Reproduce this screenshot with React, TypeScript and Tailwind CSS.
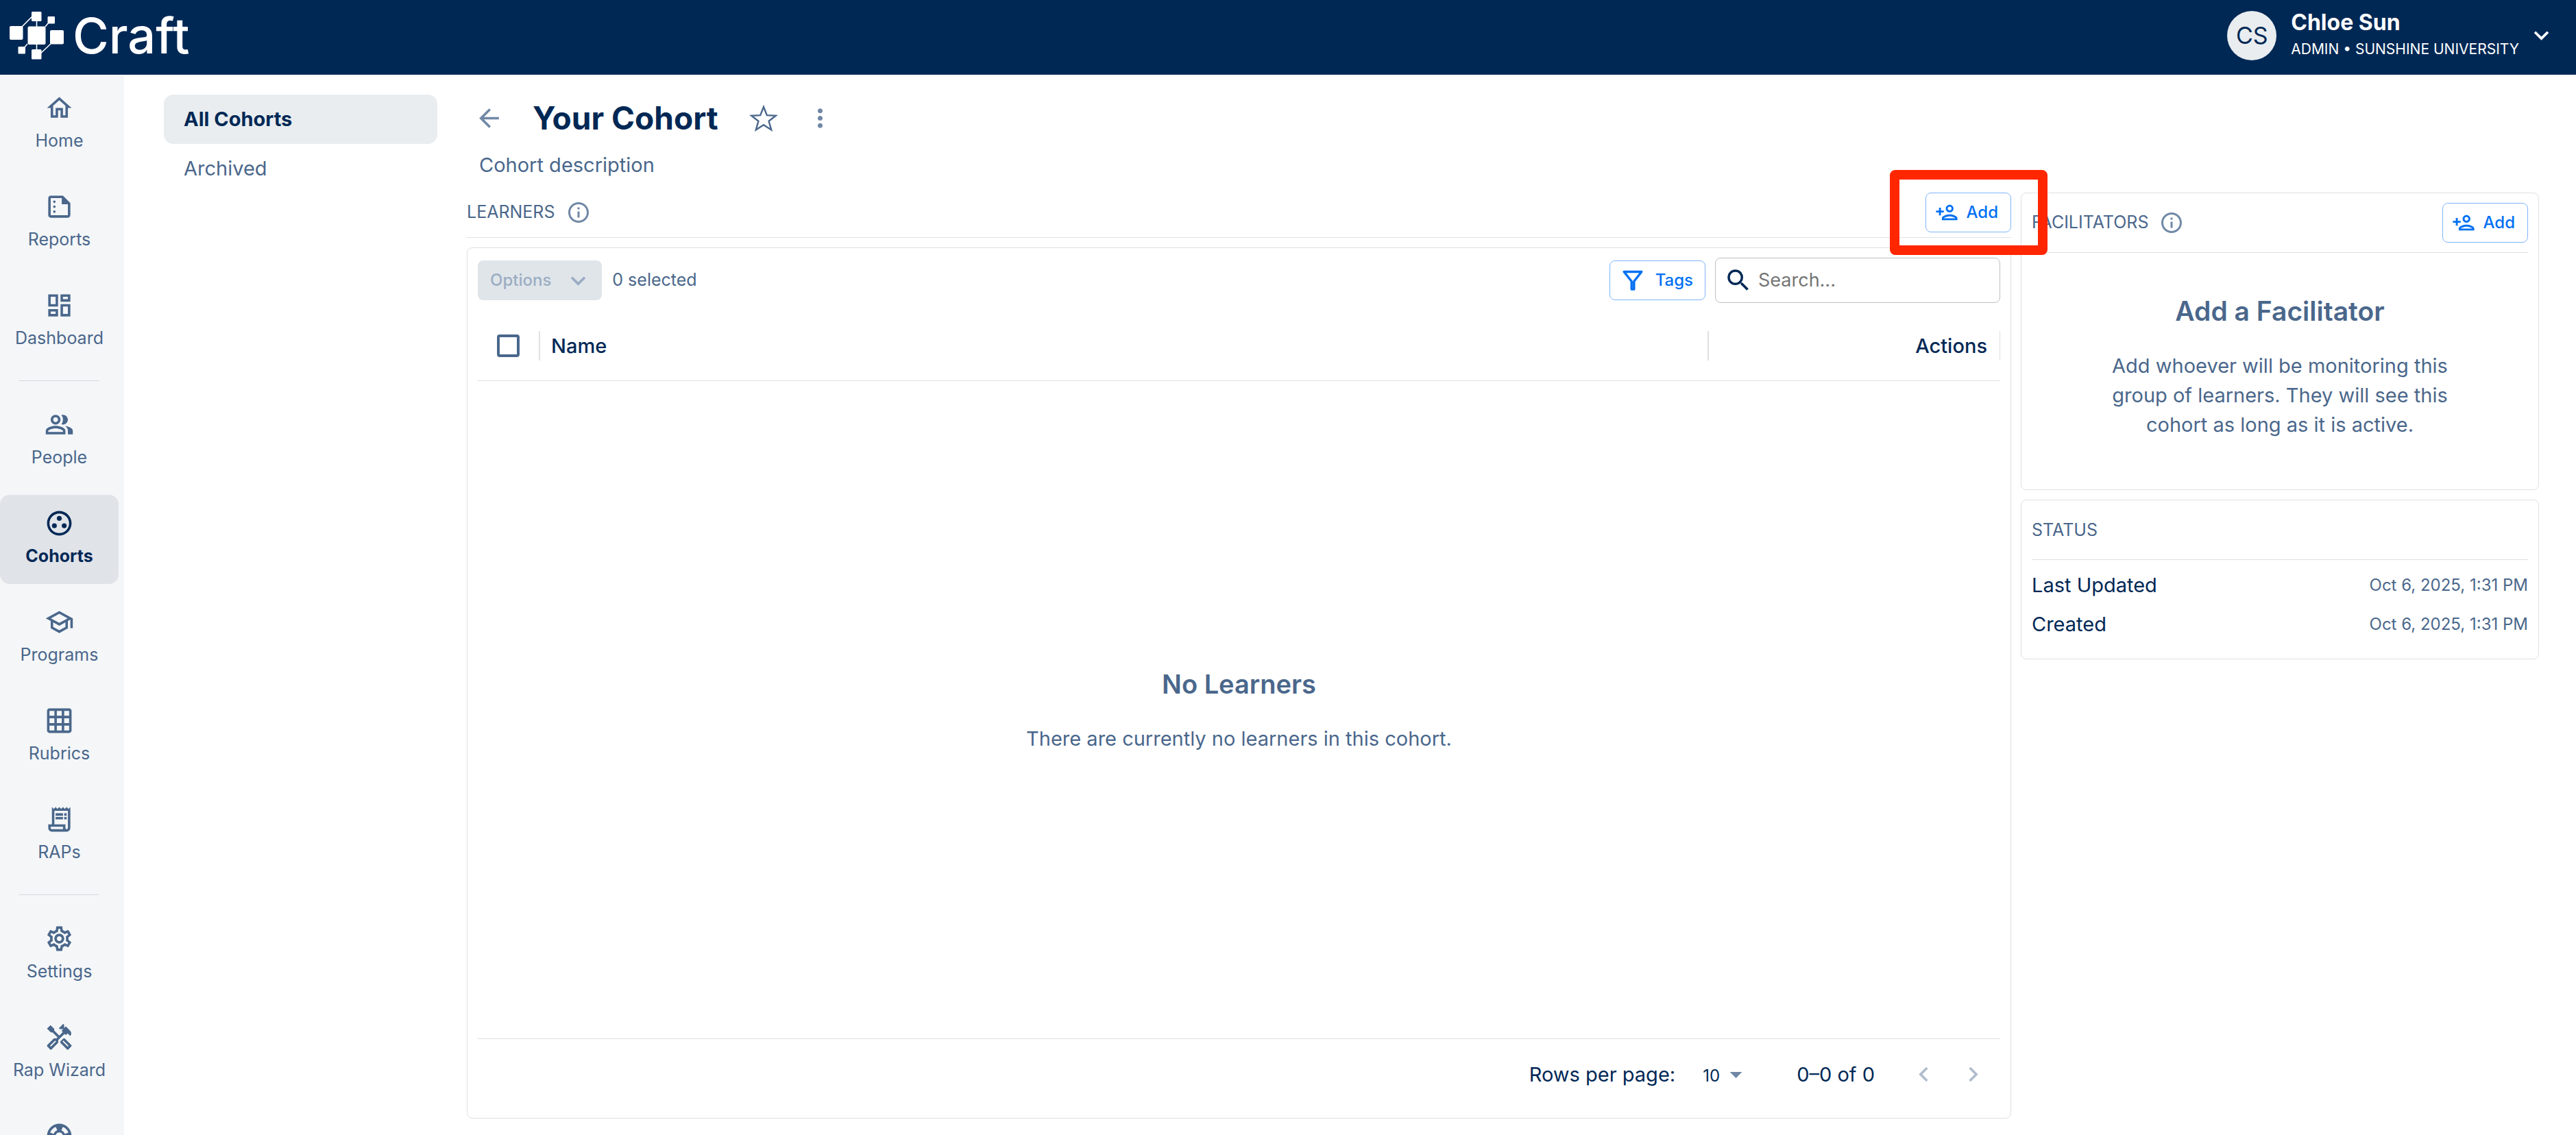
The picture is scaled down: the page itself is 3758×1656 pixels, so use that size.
import { useState } from 'react';
import type { IconType } from 'react-icons';
import {
  MdArrowBack,
  MdArrowDropDown,
  MdGridOn,
  MdKeyboardArrowDown,
  MdKeyboardArrowLeft,
  MdKeyboardArrowRight,
  MdMoreVert,
  MdOutlineDashboard,
  MdOutlineGroupWork,
  MdOutlineHandyman,
  MdOutlineHome,
  MdOutlineInfo,
  MdOutlinePeopleAlt,
  MdOutlinePersonAdd,
  MdOutlineReceiptLong,
  MdOutlineSchool,
  MdOutlineSettings,
  MdOutlineSummarize,
  MdOutlineSupport,
  MdSearch,
} from 'react-icons/md';

interface NavItem {
  label: string;
  icon: IconType;
  active?: boolean;
  iconOnly?: boolean;
}

const navGroups: NavItem[][] = [
  [
    { label: 'Home', icon: MdOutlineHome },
    { label: 'Reports', icon: MdOutlineSummarize },
    { label: 'Dashboard', icon: MdOutlineDashboard },
  ],
  [
    { label: 'People', icon: MdOutlinePeopleAlt },
    { label: 'Cohorts', icon: MdOutlineGroupWork, active: true },
    { label: 'Programs', icon: MdOutlineSchool },
    { label: 'Rubrics', icon: MdGridOn },
    { label: 'RAPs', icon: MdOutlineReceiptLong },
  ],
  [
    { label: 'Settings', icon: MdOutlineSettings },
    { label: 'Rap Wizard', icon: MdOutlineHandyman },
    { label: 'Support', icon: MdOutlineSupport, iconOnly: true },
  ],
];

const statusRows = [
  { label: 'Last Updated', value: 'Oct 6, 2025, 1:31 PM' },
  { label: 'Created', value: 'Oct 6, 2025, 1:31 PM' },
];

function LogoMark() {
  return (
    <svg viewBox="0 0 80 70" className="h-[70px] w-[80px]" fill="#fff" aria-hidden="true">
      <g stroke="#fff" strokeWidth="1.6">
        <path d="M18 22L33 7M39.500 12v46M52 22l5-6M26 47l-5 6M60 47L45 61" />
      </g>
      <rect x="26.500" y="21.500" width="26" height="26.500" rx="2" />
      <rect x="32" y="0" width="14.500" height="14" rx="1.500" />
      <rect x="55.500" y="7" width="10.500" height="10.500" rx="1" />
      <rect x="0" y="21" width="19.500" height="20" rx="2" />
      <rect x="59" y="27" width="20" height="20.500" rx="2" />
      <rect x="12.500" y="51" width="10.500" height="10.500" rx="1" />
      <rect x="32" y="55" width="14.500" height="14.500" rx="1.500" />
    </svg>
  );
}

function StarIcon() {
  return (
    <svg viewBox="0 0 42 40" className="h-10 w-[42px]" fill="none" stroke="currentColor" strokeWidth="2.4" aria-hidden="true">
      <path d="M21 4l4.800 12.200 13 .6-10.200 8 3.600 12.600L21 30.200l-11.200 7.200 3.600-12.600-10.200-8 13-.6z" />
    </svg>
  );
}

function FunnelIcon() {
  return (
    <svg viewBox="0 0 30 30" className="size-[30px]" fill="none" stroke="currentColor" strokeWidth="3.400" strokeLinejoin="round" aria-hidden="true">
      <path d="M2.200 2.500h25.600L16.800 16.500V28h-3.600V16.500z" />
    </svg>
  );
}

function AddButton({ label }: { label: string }) {
  return (
    <button
      type="button"
      aria-label={label}
      className="flex h-[58px] items-center gap-3 rounded-lg border border-[#80b5fb] bg-white pr-[18px] pl-[13px] text-2xl font-medium text-[#0070f3]"
    >
      <MdOutlinePersonAdd className="size-[34px]" />
      Add
    </button>
  );
}

function SectionTitle({ children }: { children: string }) {
  return (
    <div className="flex items-center gap-4">
      <h2 className="text-[25px] text-[#4a678b]">{children}</h2>
      <MdOutlineInfo className="size-9 text-[#7088a6]" />
    </div>
  );
}

function Header() {
  return (
    <header className="flex h-[109px] shrink-0 items-center justify-between bg-[#002855] pr-[29px] pl-[14px] text-white">
      <a href="#" className="flex items-center gap-3 pb-[6px]">
        <LogoMark />
        <span className="text-[72px] leading-none font-medium">Craft</span>
      </a>
      <button type="button" className="flex items-center pb-[6px] text-left">
        <span className="flex size-[72px] items-center justify-center rounded-full bg-[#e9edf0] text-[34px] text-[#002855]">
          CS
        </span>
        <span className="mr-[11px] ml-[21px] flex flex-col">
          <span className="text-[32px] leading-[40px] font-bold">Chloe Sun</span>
          <span className="text-[21px] leading-[38px]">ADMIN • SUNSHINE UNIVERSITY</span>
        </span>
        <MdKeyboardArrowDown className="size-[43px]" />
      </button>
    </header>
  );
}

function Sidebar() {
  return (
    <nav className="w-[181px] shrink-0 overflow-hidden bg-[#f4f6f8] pt-[7px] pr-2">
      {navGroups.map((group, i) => (
        <div key={group[0].label}>
          {i > 0 && <div className="mx-[28px] mt-[21px] mb-[22px] h-px bg-[#d5d8da]" />}
          <div className="flex flex-col gap-[14px]">
            {group.map(({ label, icon: Icon, active, iconOnly }) => (
              <a
                key={label}
                href="#"
                aria-label={label}
                aria-current={active ? 'page' : undefined}
                className={`flex h-[130px] flex-col items-center gap-2 rounded-[14px] pt-5 text-[25px] leading-9 ${
                  active ? 'bg-[#e0e3e8] font-bold text-[#002855]' : 'text-[#4a678b]'
                }`}
              >
                <Icon className="size-[43px]" />
                {!iconOnly && label}
              </a>
            ))}
          </div>
        </div>
      ))}
    </nav>
  );
}

function CohortsMenu() {
  return (
    <nav className="ml-[58px] w-[399px] shrink-0 pt-[29px] text-[29px] leading-[72px]">
      <a href="#" aria-current="page" className="block rounded-[14px] bg-[#e9edf0] px-[29px] font-bold text-[#002855]">
        All Cohorts
      </a>
      <a href="#" className="block px-[29px] text-[#4a678b]">
        Archived
      </a>
    </nav>
  );
}

function LearnersTable() {
  const [allSelected, setAllSelected] = useState(false);
  const [search, setSearch] = useState('');
  const [rows, setRows] = useState('10');

  return (
    <div className="mt-[14px] flex flex-1 flex-col rounded-lg border border-[#e0e0e0] px-[15px]">
      <div className="mt-[14px] flex items-center text-2xl">
        <button
          type="button"
          disabled
          className="flex h-[58px] items-center gap-[18px] rounded-lg bg-[#e0e5ea] pr-[13px] pl-[18px] font-medium text-[#9badc3]"
        >
          Options
          <MdKeyboardArrowDown className="size-[43px]" />
        </button>
        <span className="ml-[15px] text-[25px] text-[#4a678b]">0 selected</span>
        <button
          type="button"
          className="ml-auto flex h-[58px] items-center gap-[18px] rounded-lg border border-[#80b5fb] pr-[17px] pl-[18px] font-medium text-[#0070f3]"
        >
          <FunnelIcon />
          Tags
        </button>
        <label className="ml-[14px] flex h-[66px] w-[416px] items-center gap-2 rounded-lg border border-[#bfbfbf] pl-3 text-[27px]">
          <MdSearch className="size-[42px] shrink-0 text-[#002855]" />
          <input
            type="text"
            value={search}
            onChange={(e) => setSearch(e.target.value)}
            placeholder="Search..."
            aria-label="Search"
            className="min-w-0 flex-1 bg-transparent text-[#002855] outline-none placeholder:text-[#757575]"
          />
        </label>
      </div>

      <table className="mt-[13px] w-full table-fixed text-[29px] text-[#002855]">
        <thead>
          <tr className="h-[100px] border-b border-[#e0e0e0]">
            <th className="w-[91px] p-0">
              <div className="flex items-center justify-between pl-[28px]">
                <input
                  type="checkbox"
                  checked={allSelected}
                  onChange={(e) => setAllSelected(e.target.checked)}
                  aria-label="Select all learners"
                  className="size-[33px] appearance-none rounded-sm border-4 border-[#4a678b] checked:bg-[#4a678b]"
                />
                <span className="h-[43px] w-[2px] bg-[#e0e0e0]" />
              </div>
            </th>
            <th className="p-0 font-medium">
              <div className="flex items-center justify-between pl-4">
                Name
                <span className="h-[43px] w-[2px] bg-[#e0e0e0]" />
              </div>
            </th>
            <th className="w-[425px] p-0 font-medium">
              <div className="flex items-center justify-end gap-[18px]">
                Actions
                <span className="h-[43px] w-px bg-[#e0e0e0]" />
              </div>
            </th>
          </tr>
        </thead>
      </table>

      <div className="flex flex-1 flex-col items-center justify-center gap-9 pt-[6px] text-[#4a678b]">
        <h3 className="text-[38px] leading-[44px] font-semibold">No Learners</h3>
        <p className="text-[29px] leading-[44px]">There are currently no learners in this cohort.</p>
      </div>

      <div className="flex h-[116px] items-center justify-end border-t border-[#e0e0e0] pr-[18px] pb-3 text-[29px] text-[#002855]">
        <label htmlFor="rows">Rows per page:</label>
        <div className="relative ml-[40px]">
          <select
            id="rows"
            value={rows}
            onChange={(e) => setRows(e.target.value)}
            className="w-[70px] appearance-none bg-transparent text-2xl outline-none"
          >
            <option>10</option>
            <option>25</option>
            <option>50</option>
          </select>
          <MdArrowDropDown className="pointer-events-none absolute inset-y-0 right-0 my-auto size-[43px] text-[#7088a6]" />
        </div>
        <span className="ml-[67px]">0–0 of 0</span>
        <button type="button" disabled aria-label="Previous page" className="ml-[50px] text-[#b0bccd]">
          <MdKeyboardArrowLeft className="size-[43px]" />
        </button>
        <button type="button" disabled aria-label="Next page" className="ml-[29px] text-[#b0bccd]">
          <MdKeyboardArrowRight className="size-[43px]" />
        </button>
      </div>
    </div>
  );
}

function FacilitatorsPanel() {
  return (
    <section className="rounded-lg border border-[#e0e0e0] px-[15px] pb-[73px]">
      <div className="flex h-[87px] items-center justify-between border-b border-[#e0e0e0]">
        <SectionTitle>FACILITATORS</SectionTitle>
        <AddButton label="Add facilitator" />
      </div>
      <div className="flex flex-col items-center gap-9 pt-[63px] text-center text-[#4a678b]">
        <h3 className="text-[39px] leading-[44px] font-semibold">Add a Facilitator</h3>
        <p className="w-[520px] text-[29px] leading-[43px]">
          Add whoever will be monitoring this group of learners. They will see this cohort as long as it is active.
        </p>
      </div>
    </section>
  );
}

function StatusPanel() {
  return (
    <section className="rounded-lg border border-[#e0e0e0] px-[15px] pb-[22px]">
      <h2 className="border-b border-[#e0e0e0] text-[25px] leading-[86px] text-[#4a678b]">STATUS</h2>
      <dl className="pt-[8px]">
        {statusRows.map((row) => (
          <div key={row.label} className="flex items-center justify-between leading-[57px]">
            <dt className="text-[29px] text-[#002855]">{row.label}</dt>
            <dd className="text-2xl text-[#4a678b]">{row.value}</dd>
          </div>
        ))}
      </dl>
    </section>
  );
}

export default function App() {
  return (
    <div className="flex h-screen flex-col overflow-hidden bg-white font-['Inter',sans-serif]">
      <Header />
      <div className="flex min-h-0 flex-1">
        <Sidebar />
        <CohortsMenu />
        <main className="ml-[43px] flex min-w-0 flex-1 flex-col pt-[35px] pr-[54px] pb-6">
          <div className="flex h-14 items-center pl-[11px]">
            <button type="button" aria-label="Back" className="text-[#7088a6]">
              <MdArrowBack className="size-[43px]" />
            </button>
            <h1 className="ml-[42px] text-[46px] leading-[54px] font-bold text-[#002855]">Your Cohort</h1>
            <button type="button" aria-label="Favorite" className="ml-[45px] text-[#4a678b]">
              <StarIcon />
            </button>
            <button type="button" aria-label="More" className="ml-[40px] text-[#7088a6]">
              <MdMoreVert className="size-[43px]" />
            </button>
          </div>
          <p className="mt-[19px] pl-[18px] text-[29px] leading-[43px] text-[#4a678b]">Cohort description</p>

          <div className="mt-[19px] flex min-h-0 flex-1 gap-[14px]">
            <section className="flex min-w-0 flex-1 flex-col">
              <div className="flex h-[66px] items-start justify-between border-b border-[#e0e0e0]">
                <div className="flex h-[58px] items-center">
                  <SectionTitle>LEARNERS</SectionTitle>
                </div>
                <div className="relative">
                  <AddButton label="Add learner" />
                  <div className="pointer-events-none absolute -top-[33px] -right-[53px] z-10 h-[124px] w-[230px] rounded-lg border-[14px] border-[#ff2600]" />
                </div>
              </div>
              <LearnersTable />
            </section>
            <aside className="flex w-[756px] shrink-0 flex-col gap-[14px]">
              <FacilitatorsPanel />
              <StatusPanel />
            </aside>
          </div>
        </main>
      </div>
    </div>
  );
}
